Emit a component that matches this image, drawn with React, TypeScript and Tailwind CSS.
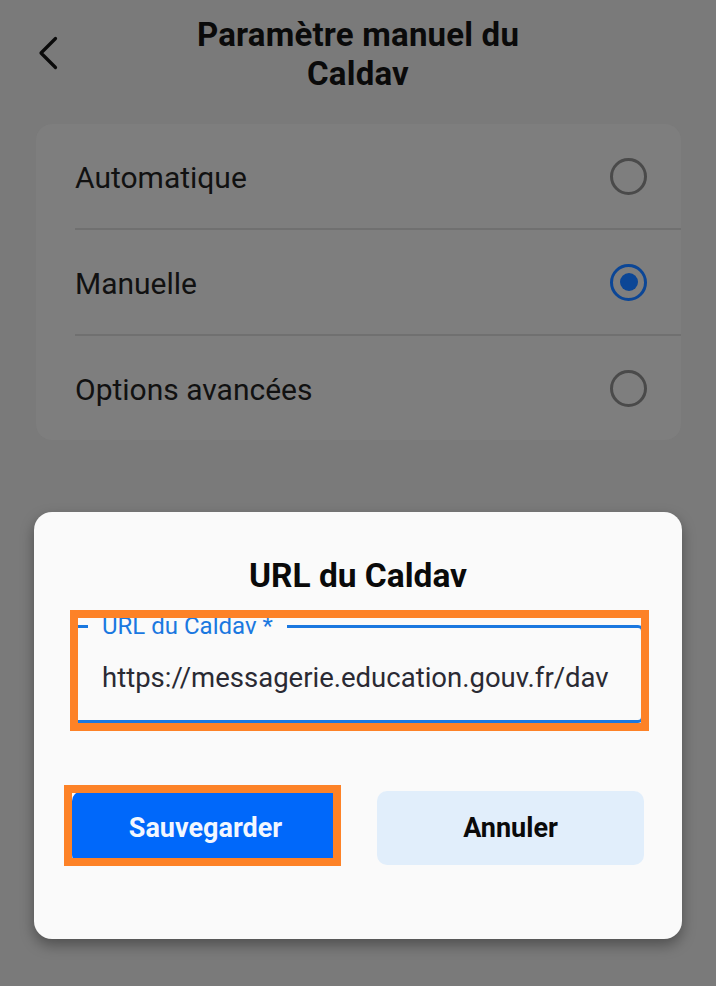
import React from "react";

function Radio({ checked }: { checked?: boolean }) {
  if (checked) {
    return (
      <div className="w-[37px] h-[37px] rounded-full border-[3px] border-[#0b4696] flex items-center justify-center">
        <div className="w-[18px] h-[18px] rounded-full bg-[#0b4696]" />
      </div>
    );
  }
  return <div className="w-[37px] h-[37px] rounded-full border-[3px] border-[#4a4a4a]" />;
}

function Row({ label, checked }: { label: string; checked?: boolean }) {
  return (
    <div className="h-[104px] flex items-center justify-between pl-[39px] pr-[34px]">
      <span className="text-[30px] leading-[36px] pt-[4px] text-[#111111]">{label}</span>
      <Radio checked={checked} />
    </div>
  );
}

export default function App() {
  return (
    <div className="relative w-[716px] h-[986px] overflow-hidden bg-[#7a7a7a] font-['Roboto',sans-serif]">
      {/* Header */}
      <div className="grid grid-cols-[1fr_auto_1fr] pt-[15px]">
        <div className="pl-[38px] pt-[20px]">
          <svg width="22" height="36" viewBox="0 0 22 36" fill="none">
            <path d="M17.5 3.5 L3 18 L17.5 32.5" stroke="#0a0a0a" strokeWidth="3.2" strokeLinecap="round" strokeLinejoin="round" />
          </svg>
        </div>
        <div className="text-center text-[33px] leading-[39px] font-bold tracking-[0.2px] text-[#0a0a0a]">
          Paramètre manuel du
          <br />
          Caldav
        </div>
        <div />
      </div>

      {/* Card */}
      <div className="mt-[31px] ml-[36px] mr-[35px] rounded-[16px] bg-[#7e7e7e]">
        <Row label="Automatique" />
        <div className="ml-[39px] h-[2px] bg-[#707070]" />
        <Row label="Manuelle" checked />
        <div className="ml-[39px] h-[2px] bg-[#707070]" />
        <Row label="Options avancées" />
      </div>

      {/* Dialog */}
      <div className="absolute left-[34px] top-[512px] w-[648px] rounded-[18px] bg-[#fafafa] shadow-[0_6px_14px_rgba(0,0,0,0.35)] px-[38px] pt-[45px] pb-[74px]">
        <div className="text-center text-[33.5px] leading-[38px] font-bold text-[#0a0a0a]">URL du Caldav</div>

        <div className="relative mt-[30px] h-[98px] rounded-[6px] border-[3px] border-[#1a78e0] pl-[27px] pt-[34px]">
          <span className="absolute left-[13px] top-[-16px] bg-[#fafafa] px-[14px] text-[24px] leading-[28px] text-[#1a78e0]">
            URL du Caldav *
          </span>
          <div className="text-[27.5px] leading-[32px] text-[#2a2a33] whitespace-nowrap">
            https://messagerie.education.gouv.fr/dav
          </div>
          <div className="absolute left-[-5px] top-[-18px] w-[579px] h-[121px] border-[8px] border-[#fd8227]" />
        </div>

        <div className="mt-[68px] flex justify-between">
          <div className="relative w-[267px] h-[74px]">
            <div className="w-full h-full rounded-[10px] bg-[#0068fa] flex items-center justify-center text-[27px] font-bold text-[#f2f7ff]">
              Sauvegarder
            </div>
            <div className="absolute left-[-8px] top-[-6px] w-[277px] h-[81px] border-[8px] border-[#fd8227]" />
          </div>
          <div className="w-[267px] h-[74px] rounded-[10px] bg-[#e1eefb] flex items-center justify-center text-[27px] font-bold text-[#0a0a0a]">
            Annuler
          </div>
        </div>
      </div>
    </div>
  );
}
